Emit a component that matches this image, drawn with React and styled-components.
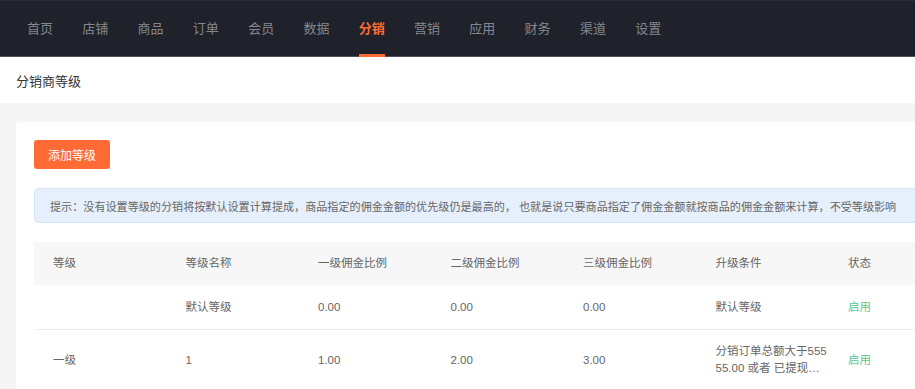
import React from "react";
import styled, { createGlobalStyle } from "styled-components";

const Global = createGlobalStyle`
  html, body { margin: 0; padding: 0; overflow: hidden; background: #f5f5f5; }
  body { font-family: "Liberation Sans", "Noto Sans CJK SC", sans-serif; }
  * { box-sizing: border-box; }
`;

const Page = styled.div`
  width: 1000px;
  min-height: 389px;
  background: #f5f5f5;
`;

const Nav = styled.nav`
  height: 57px;
  background: #1f222a;
  border-top: 1px solid #2a2d35;
  border-bottom: 1px solid #50535a;
  display: flex;
  align-items: stretch;
  padding-left: 12.3px;
`;

const NavItem = styled.div`
  position: relative;
  padding: 0 14.65px;
  display: flex;
  align-items: center;
  font-size: 13px;
  color: ${(p) => (p.$active ? "#ff6a33" : "#84878e")};
  font-weight: ${(p) => (p.$active ? 600 : 400)};
  padding-bottom: 3px;
  &::after {
    content: "";
    display: ${(p) => (p.$active ? "block" : "none")};
    position: absolute;
    left: 14.65px;
    right: 14.65px;
    bottom: -1px;
    height: 3px;
    background: #ff6a33;
  }
`;

const TitleBar = styled.div`
  height: 46px;
  background: #fff;
  display: flex;
  align-items: center;
  padding-left: 16px;
  font-size: 13px;
  color: #333;
`;

const Content = styled.div`
  padding: 19px 0 0 16px;
`;

const Card = styled.div`
  background: #fff;
  border-radius: 3px;
  padding: 18px 0 0 18px;
  min-height: 280px;
`;

const AddButton = styled.button`
  width: 76px;
  height: 29px;
  border: none;
  border-radius: 3px;
  background: #ff6a35;
  color: #fff;
  font-family: inherit;
  font-size: 12px;
  padding: 0;
  cursor: pointer;
`;

const Tip = styled.div`
  margin-top: 19px;
  height: 35px;
  background: #e6f0fc;
  border: 1px solid #d6e5f8;
  border-radius: 4px;
  display: flex;
  align-items: center;
  padding-left: 15px;
  font-size: 11.1px;
  color: #666;
  white-space: nowrap;
`;

const Table = styled.div`
  margin-top: 19px;
  width: ${7 * 132.5}px;
`;

const Row = styled.div`
  display: grid;
  grid-template-columns: repeat(7, 132.5px);
  align-items: center;
  height: ${(p) => p.$h}px;
  background: ${(p) => (p.$head ? "#f7f7f7" : "#fff")};
  border-bottom: ${(p) => (p.$line ? "1px solid #eeeeee" : "none")};
`;

const Cell = styled.div`
  padding: 0 0 0 19px;
  font-size: 11.5px;
  line-height: 17px;
  color: ${(p) => (p.$green ? "#5cc98f" : "#666")};
  word-break: break-all;
  display: -webkit-box;
  -webkit-line-clamp: 2;
  -webkit-box-orient: vertical;
  overflow: hidden;
`;

const navItems = ["首页", "店铺", "商品", "订单", "会员", "数据", "分销", "营销", "应用", "财务", "渠道", "设置"];
const headers = ["等级", "等级名称", "一级佣金比例", "二级佣金比例", "三级佣金比例", "升级条件", "状态"];
const rows = [
  { h: 45, line: true, cells: ["", "默认等级", "0.00", "0.00", "0.00", "默认等级", "启用"] },
  { h: 60, line: false, cells: ["一级", "1", "1.00", "2.00", "3.00", "分销订单总额大于55555.00 或者 已提现佣金总额大于100", "启用"] },
];

export default function App() {
  return (
    <Page>
      <Global />
      <Nav>
        {navItems.map((n) => (
          <NavItem key={n} $active={n === "分销"}>{n}</NavItem>
        ))}
      </Nav>
      <TitleBar>分销商等级</TitleBar>
      <Content>
        <Card>
          <AddButton>添加等级</AddButton>
          <Tip>
            提示：没有设置等级的分销将按默认设置计算提成，商品指定的佣金金额的优先级仍是最高的， 也就是说只要商品指定了佣金金额就按商品的佣金金额来计算，不受等级影响
          </Tip>
          <Table>
            <Row $head $h={43}>
              {headers.map((h) => (
                <Cell key={h}>{h}</Cell>
              ))}
            </Row>
            {rows.map((r, i) => (
              <Row key={i} $h={r.h} $line={r.line}>
                {r.cells.map((c, j) => (
                  <Cell key={j} $green={j === 6}>{c}</Cell>
                ))}
              </Row>
            ))}
          </Table>
        </Card>
      </Content>
    </Page>
  );
}
